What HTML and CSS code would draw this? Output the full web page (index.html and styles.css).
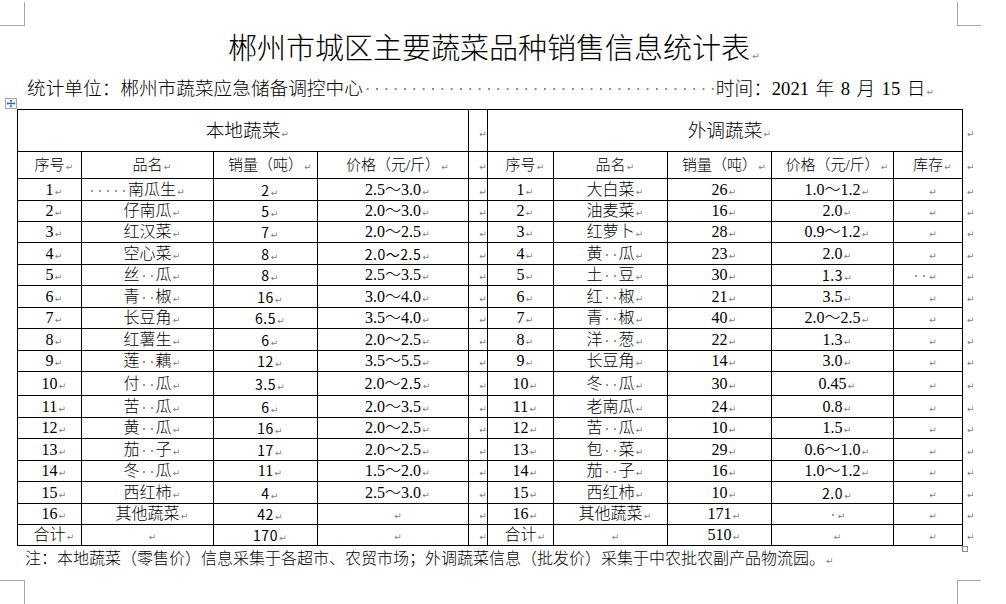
FILE: index.html
```html
<!DOCTYPE html>
<html lang="zh-CN">
<head>
<meta charset="utf-8">
<title>郴州市城区主要蔬菜品种销售信息统计表</title>
<link rel="stylesheet" href="styles.css">
</head>
<body>
<div class="crop tl"></div>
<div class="crop tr"></div>
<div class="crop bl"></div>
<div class="crop br"></div>

<div class="page">
  <h1 class="title">郴州市城区主要蔬菜品种销售信息统计表<i class="pm"></i></h1>
  <div class="sub"><span>统计单位：郴州市蔬菜应急储备调控中心</span><span class="dots"></span><span class="when">时间：2021 年 8 月 15 日</span><i class="pm"></i></div>

  <div class="tw">
    <svg class="handle" width="12" height="11" viewBox="0 0 12 11">
      <rect x="0.5" y="0.5" width="11" height="10" fill="#fff" stroke="#a6a6a6"/>
      <path d="M6 2.5v6M2.5 5.5h7" stroke="#2f62c9" stroke-width="1"/>
      <path d="M6 1.5l-1.8 1.8h3.6zM6 9.5l-1.8-1.8h3.6zM1.5 5.5l1.8-1.8v3.6zM10.5 5.5l-1.8-1.8v3.6z" fill="#2f62c9"/>
    </svg>
    <table class="grid">
      <colgroup>
        <col class="c1"><col class="c2"><col class="c3"><col class="c4"><col class="c5">
        <col class="c6"><col class="c7"><col class="c8"><col class="c9"><col class="c10"><col class="c11">
      </colgroup>
      <tbody>
        <tr class="h42 big"><td colspan="4">本地蔬菜</td><td></td><td colspan="5">外调蔬菜</td><td class="eor"></td></tr>
        <tr class="h27 hd"><td>序号</td><td>品名</td><td>销量（吨）</td><td>价格（元/斤）</td><td></td><td>序号</td><td>品名</td><td>销量（吨）</td><td>价格（元/斤）</td><td>库存</td><td class="eor"></td></tr>

        <tr class="h22"><td>1</td><td class="r1n"><span class="s5"></span>南瓜生</td><td class="m">2</td><td>2.5～3.0</td><td></td><td>1</td><td>大白菜</td><td>26</td><td>1.0～1.2</td><td></td><td class="eor"></td></tr>
        <tr class="h21"><td>2</td><td>仔南瓜</td><td class="m">5</td><td>2.0～3.0</td><td></td><td>2</td><td>油麦菜</td><td>16</td><td>2.0</td><td></td><td class="eor"></td></tr>
        <tr class="h21"><td>3</td><td>红汉菜</td><td class="m">7</td><td>2.0～2.5</td><td></td><td>3</td><td>红萝卜</td><td>28</td><td>0.9～1.2</td><td></td><td class="eor"></td></tr>
        <tr class="h22"><td>4</td><td>空心菜</td><td class="m">8</td><td class="m">2.0～2.5</td><td></td><td>4</td><td>黄<span class="s2"></span>瓜</td><td>23</td><td>2.0</td><td></td><td class="eor"></td></tr>
        <tr class="h21"><td>5</td><td>丝<span class="s2"></span>瓜</td><td class="m">8</td><td>2.5～3.5</td><td></td><td>5</td><td>土<span class="s2"></span>豆</td><td>30</td><td class="m">1.3</td><td><span class="s2 hang"></span></td><td class="eor"></td></tr>
        <tr class="h22"><td>6</td><td>青<span class="s2"></span>椒</td><td class="m">16</td><td>3.0～4.0</td><td></td><td>6</td><td>红<span class="s2"></span>椒</td><td>21</td><td>3.5</td><td></td><td class="eor"></td></tr>
        <tr class="h21"><td>7</td><td>长豆角</td><td class="m">6.5</td><td>3.5～4.0</td><td></td><td>7</td><td>青<span class="s2"></span>椒</td><td>40</td><td>2.0～2.5</td><td></td><td class="eor"></td></tr>
        <tr class="h22"><td>8</td><td>红薯生</td><td class="m">6</td><td>2.0～2.5</td><td></td><td>8</td><td>洋<span class="s2"></span>葱</td><td>22</td><td>1.3</td><td></td><td class="eor"></td></tr>
        <tr class="h21"><td>9</td><td>莲<span class="s2"></span>藕</td><td class="m">12</td><td>3.5～5.5</td><td></td><td>9</td><td>长豆角</td><td>14</td><td>3.0</td><td></td><td class="eor"></td></tr>
        <tr class="h24"><td>10</td><td>付<span class="s2"></span>瓜</td><td class="m">3.5</td><td>2.0～<span class="m">2.5</span></td><td></td><td>10</td><td>冬<span class="s2"></span>瓜</td><td>30</td><td>0.45</td><td></td><td class="eor"></td></tr>
        <tr class="h22"><td>11</td><td>苦<span class="s2"></span>瓜</td><td class="m">6</td><td>2.0～3.5</td><td></td><td>11</td><td>老南瓜</td><td>24</td><td>0.8</td><td></td><td class="eor"></td></tr>
        <tr class="h21"><td>12</td><td>黄<span class="s2"></span>瓜</td><td class="m">16</td><td>2.0～2.5</td><td></td><td>12</td><td>苦<span class="s2"></span>瓜</td><td>10</td><td>1.5</td><td></td><td class="eor"></td></tr>
        <tr class="h22"><td>13</td><td>茄<span class="s2"></span>子</td><td class="m">17</td><td>2.0～2.5</td><td></td><td>13</td><td>包<span class="s2"></span>菜</td><td>29</td><td>0.6～1.0</td><td></td><td class="eor"></td></tr>
        <tr class="h21"><td>14</td><td>冬<span class="s2"></span>瓜</td><td>11</td><td>1.5～2.0</td><td></td><td>14</td><td>茄<span class="s2"></span>子</td><td>16</td><td>1.0～1.2</td><td></td><td class="eor"></td></tr>
        <tr class="h22"><td>15</td><td>西红柿</td><td class="m">4</td><td>2.5～3.0</td><td></td><td>15</td><td>西红柿</td><td>10</td><td class="m">2.0</td><td></td><td class="eor"></td></tr>
        <tr class="h21"><td>16</td><td>其他蔬菜</td><td class="m">42</td><td></td><td></td><td>16</td><td>其他蔬菜</td><td>171</td><td><span class="s1"></span></td><td></td><td class="eor"></td></tr>
        <tr class="h21"><td>合计</td><td></td><td class="m">170</td><td></td><td></td><td>合计</td><td></td><td>510</td><td></td><td></td><td class="eor"></td></tr>
      </tbody>
    </table>
    <div class="resize"></div>
  </div>

  <p class="note">注：本地蔬菜（零售价）信息采集于各超市、农贸市场；外调蔬菜信息（批发价）采集于中农批农副产品物流园。<i class="pm"></i></p>
</div>
</body>
</html>
```

FILE: styles.css
```css
* { box-sizing: border-box; }

html, body {
  margin: 0;
  padding: 0;
  background: #fff;
}

body {
  width: 1006px;
  height: 604px;
  overflow: hidden;
  position: relative;
  font-family: "Liberation Serif", "Noto Sans CJK SC Light", "Noto Sans CJK SC", serif;
  font-weight: 300;
  color: #000;
}

/* page corner marks */
.crop {
  position: absolute;
  border: 0 solid #a8a8a8;
}
.crop.tl { left: 0; top: 2px; width: 25px; height: 24px; border-right-width: 1px; border-bottom-width: 1px; }
.crop.tr { left: 957px; top: 2px; width: 24px; height: 24px; border-left-width: 1px; border-bottom-width: 1px; }
.crop.bl { left: 0; top: 580px; width: 25px; height: 24px; border-right-width: 1px; border-top-width: 1px; }
.crop.br { left: 957px; top: 580px; width: 24px; height: 24px; border-left-width: 1px; border-top-width: 1px; }

.page {
  padding-left: 17px;
}

.title {
  margin: 26px 0 0;
  width: 945px;
  text-align: center;
  font-family: "Noto Sans CJK SC Light", "Noto Sans CJK SC", sans-serif;
  font-weight: 300;
  font-size: 29px;
  line-height: 40px;
  white-space: nowrap;
}

.sub {
  margin-top: 11px;
  padding-left: 10px;
  font-size: 18.67px;
  line-height: 24px;
  white-space: nowrap;
}

.when { word-spacing: 1.8px; }

.dots {
  display: inline-block;
  width: 353px;
  height: 10px;
  vertical-align: 1px;
  background: radial-gradient(circle at center, #8a8a8a 0.9px, transparent 1.4px) 0 0 / 9.33px 10px repeat-x;
}

/* Word formatting marks (zero net width, like Word's paragraph marks) */
.pm::after,
.grid td::after {
  content: "\21B5";
  display: inline-block;
  width: 8px;
  margin-left: 1px;
  margin-right: -9px;
  font: 9px/1 "DejaVu Sans", sans-serif;
  letter-spacing: 0;
  color: #808080;
  white-space: nowrap;
}
.pm { font-style: normal; }
.title .pm::after { margin-left: 2px; }

.s1, .s2, .s5 {
  display: inline-block;
  height: 4px;
  vertical-align: 2px;
  background: radial-gradient(circle at center, #9a9a9a 0.8px, transparent 1.3px) 0 0 / 8px 4px repeat-x;
}
.s1 { width: 8px; }
.s2 { width: 16px; }
.s5 { width: 40px; }
.hang { margin-left: -16px; }

/* table */
.tw {
  position: relative;
  margin-top: 8px;
  width: 975px;
}

.handle {
  position: absolute;
  left: -12px;
  top: -11px;
}

.resize {
  position: absolute;
  left: 945px;
  top: 437px;
  width: 6px;
  height: 6px;
  border: 1px solid #8a8a8a;
  background: #fff;
}

.grid {
  border-collapse: collapse;
  table-layout: fixed;
  width: 975px;
}

.c1 { width: 64px; }
.c2 { width: 132px; }
.c3 { width: 104px; }
.c4 { width: 151px; }
.c5 { width: 19px; }
.c6 { width: 66px; }
.c7 { width: 114px; }
.c8 { width: 104px; }
.c9 { width: 122px; }
.c10 { width: 69px; }
.c11 { width: 30px; }

.grid td {
  border: 1px solid #000;
  padding: 0;
  text-align: center;
  vertical-align: middle;
  white-space: nowrap;
  font-size: 16px;
  line-height: 20px;
}

.grid td.eor {
  border: none;
  text-align: left;
  padding-left: 3px;
}

.h42 td { height: 42px; }
.h27 td { height: 27px; }
.h24 td { height: 24px; }
.h22 td { height: 22px; }
.h21 td { height: 21px; }

.big td { font-size: 18.67px; line-height: 24px; }
.hd td { font-size: 15px; }

/* SimSun-like thin sans digits */
.grid td.m,
.grid .m {
  font-family: "Noto Sans CJK SC", sans-serif;
  font-weight: 400;
  font-size: 14px;
  letter-spacing: 0.5px;
}

.grid td.r1n { padding-right: 31px; }

.note {
  margin: 2px 0 0;
  padding-left: 8px;
  font-size: 16px;
  line-height: 22px;
  white-space: nowrap;
}
```
